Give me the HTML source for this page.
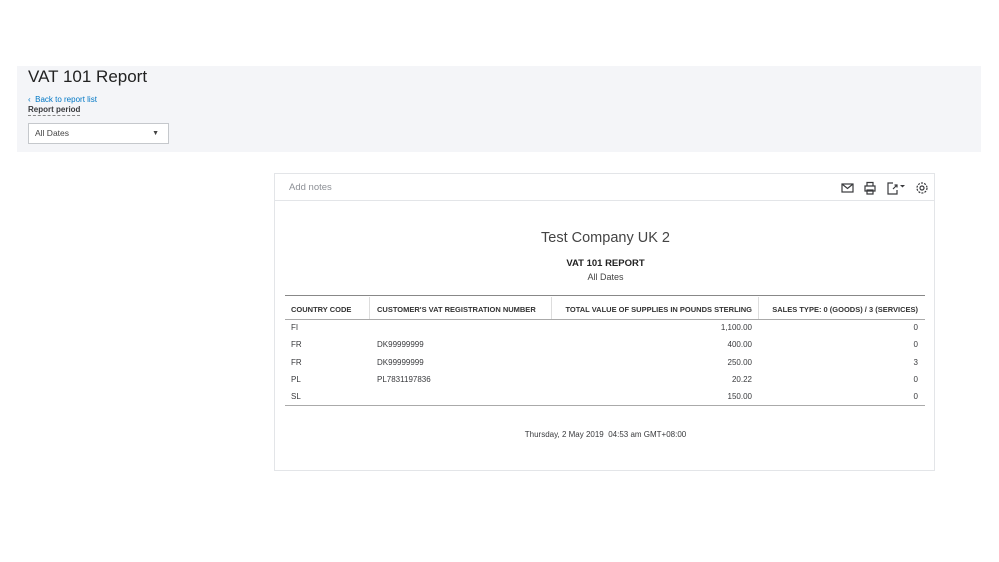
<!DOCTYPE html>
<html><head><style>
*{margin:0;padding:0;box-sizing:border-box}
body{width:999px;height:562px;background:#fff;font-family:"Liberation Sans",sans-serif;position:relative;overflow:hidden;color:#393a3d}
.abs{position:absolute}
.bar{left:17px;top:66px;width:964px;height:86px;background:#f4f5f8}
.card{left:274px;top:173px;width:661px;height:298px;border:1px solid #e3e5e8;background:#fff}
.t{position:absolute;font-size:8px;white-space:nowrap}
.h{font-weight:bold;font-size:7.5px;color:#333}
.r{text-align:right}
</style></head><body>
<div class="abs bar"></div>
<div class="abs" style="left:28px;top:67px;font-size:17px;color:#222">VAT 101 Report</div>
<div class="abs" style="left:28px;top:95px;font-size:8px;color:#0077c5">&#8249;&nbsp; Back to report list</div>
<div class="abs" style="left:28px;top:105px;font-size:8px;font-weight:bold;color:#393a3d;border-bottom:1px dashed #888;line-height:10px">Report period</div>
<div class="abs" style="left:28px;top:123px;width:141px;height:21px;background:#fff;border:1px solid #c5c8cc;font-size:8.5px;line-height:19px;padding-left:6px;color:#444">All Dates<span style="position:absolute;right:9px;top:0;font-size:7px">&#9660;</span></div>
<div class="abs card">
 <div style="height:27px;border-bottom:1px solid #e3e5e8;position:relative">
  <div class="t" style="left:14px;top:8px;font-size:9.5px;color:#8d9096">Add notes</div>
  <svg class="abs" style="left:566px;top:7px" width="90" height="14" viewBox="0 0 90 14" fill="none" stroke="#393a3d" stroke-width="1.2">
   <rect x="1" y="3" width="11" height="8"/><path d="M1 3l5.5 4.5L12 3"/>
   <path d="M26 5V1.5h6V5M24 5h10v5h-10zM26 9h6v4h-6z"/>
   <path d="M52 2h-5v11h9V9M52 8l4-4m-2.5 0H56v2.5"/>
   <path d="M59 4h5l-2.5 2.5z" fill="#393a3d" stroke="none"/>
   <circle cx="81" cy="7" r="2"/><circle cx="81" cy="7" r="5" stroke-dasharray="2 1.2"/>
  </svg>
 </div>
 <div class="t" style="left:0;width:661px;text-align:center;top:56px;font-size:14.5px;color:#444">Test Company UK 2</div>
 <div class="t" style="left:0;width:661px;text-align:center;top:84px;font-size:9.5px;font-weight:bold;color:#222">VAT 101 REPORT</div>
 <div class="t" style="left:0;width:661px;text-align:center;top:98px;font-size:9px;color:#444">All Dates</div>
 <div class="abs" style="left:10px;top:121px;width:640px;border-top:1px solid #888"></div>
 <div class="abs" style="left:94px;top:123px;height:22px;border-left:1px solid #ddd"></div>
 <div class="abs" style="left:276px;top:123px;height:22px;border-left:1px solid #ddd"></div>
 <div class="abs" style="left:483px;top:123px;height:22px;border-left:1px solid #ddd"></div>
 <div class="t h" style="left:16px;top:131px">COUNTRY CODE</div>
 <div class="t h" style="left:102px;top:131px">CUSTOMER'S VAT REGISTRATION NUMBER</div>
 <div class="t h r" style="right:182px;top:131px">TOTAL VALUE OF SUPPLIES IN POUNDS STERLING</div>
 <div class="t h r" style="right:16px;top:131px">SALES TYPE: 0 (GOODS) / 3 (SERVICES)</div>
 <div class="abs" style="left:10px;top:145px;width:640px;border-top:1px solid #aaa"></div>
 <div class="t" style="left:16px;top:149px">FI</div><div class="t r" style="right:182px;top:149px">1,100.00</div><div class="t r" style="right:16px;top:149px">0</div>
 <div class="t" style="left:16px;top:166px">FR</div><div class="t" style="left:102px;top:166px">DK99999999</div><div class="t r" style="right:182px;top:166px">400.00</div><div class="t r" style="right:16px;top:166px">0</div>
 <div class="t" style="left:16px;top:184px">FR</div><div class="t" style="left:102px;top:184px">DK99999999</div><div class="t r" style="right:182px;top:184px">250.00</div><div class="t r" style="right:16px;top:184px">3</div>
 <div class="t" style="left:16px;top:201px">PL</div><div class="t" style="left:102px;top:201px">PL7831197836</div><div class="t r" style="right:182px;top:201px">20.22</div><div class="t r" style="right:16px;top:201px">0</div>
 <div class="t" style="left:16px;top:218px">SL</div><div class="t r" style="right:182px;top:218px">150.00</div><div class="t r" style="right:16px;top:218px">0</div>
 <div class="abs" style="left:10px;top:231px;width:640px;border-top:1px solid #aaa"></div>
 <div class="t" style="left:0;width:661px;text-align:center;top:256px">Thursday, 2 May 2019&nbsp;&nbsp;04:53 am GMT+08:00</div>
</div>
</body></html>
